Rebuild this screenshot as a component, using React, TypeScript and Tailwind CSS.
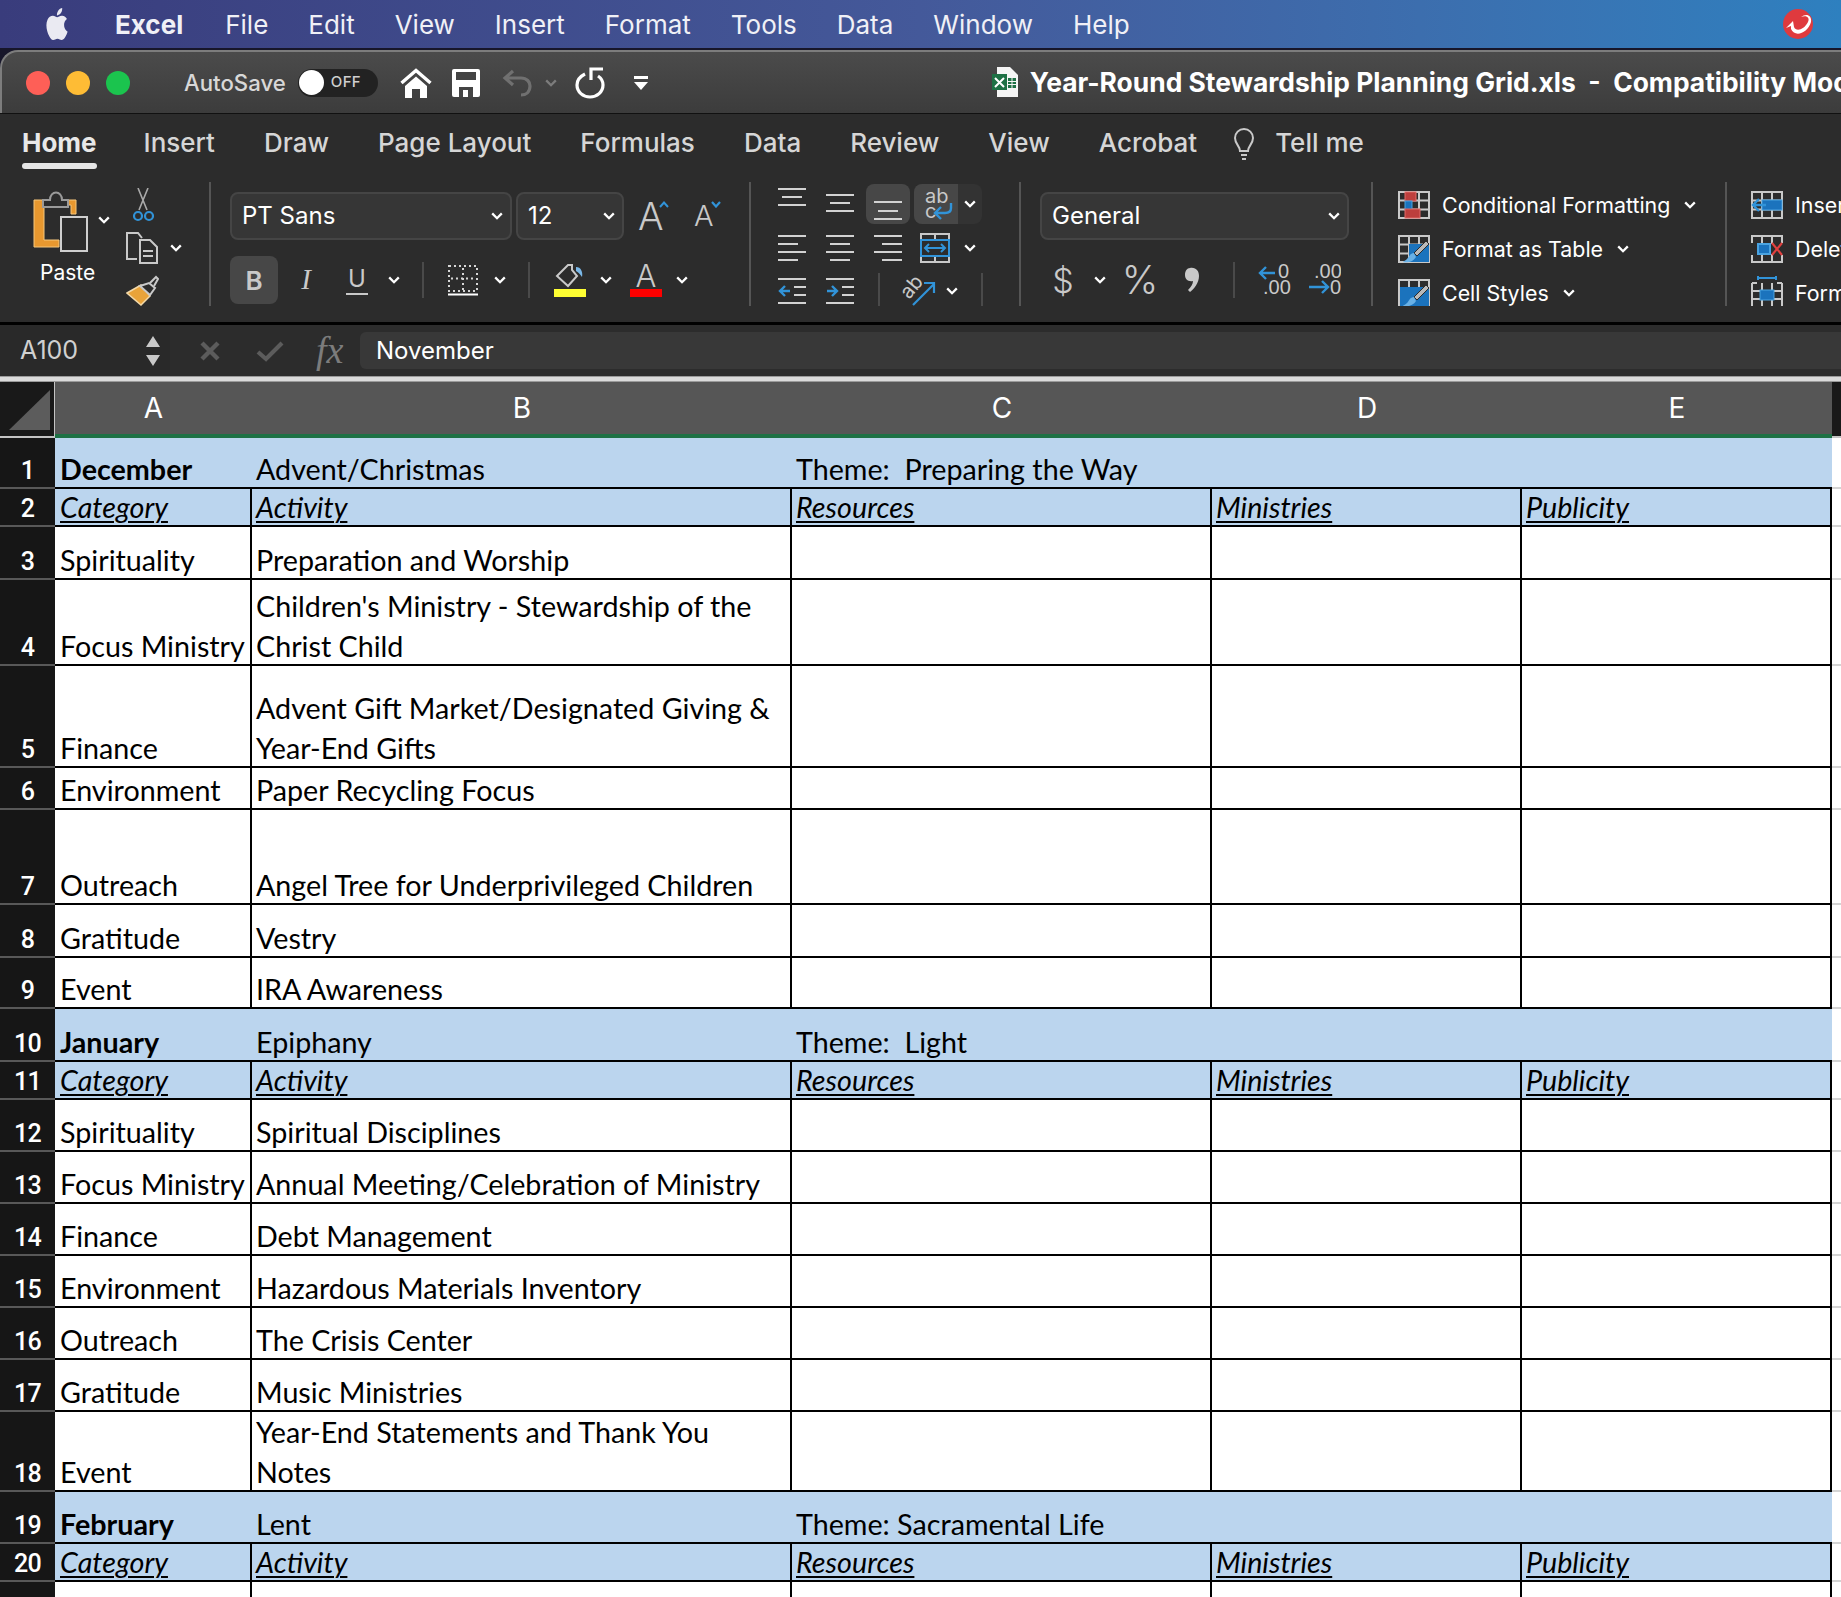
import type { ReactNode } from 'react';

const menuItems = ['File', 'Edit', 'View', 'Insert', 'Format', 'Tools', 'Data', 'Window', 'Help'];
const tabs = ['Insert', 'Draw', 'Page Layout', 'Formulas', 'Data', 'Review', 'View', 'Acrobat'];

type Row = { n: number; h: number; kind?: 'month' | 'head'; a?: string; b?: string; c?: string };

const rows: Row[] = [
  { n: 1, h: 51, kind: 'month', a: 'December', b: 'Advent/Christmas', c: 'Theme:  Preparing the Way' },
  { n: 2, h: 38, kind: 'head' },
  { n: 3, h: 53, a: 'Spirituality', b: 'Preparation and Worship' },
  { n: 4, h: 86, a: 'Focus Ministry', b: "Children's Ministry - Stewardship of the\nChrist Child" },
  { n: 5, h: 102, a: 'Finance', b: 'Advent Gift Market/Designated Giving &\nYear-End Gifts' },
  { n: 6, h: 42, a: 'Environment', b: 'Paper Recycling Focus' },
  { n: 7, h: 95, a: 'Outreach', b: 'Angel Tree for Underprivileged Children' },
  { n: 8, h: 53, a: 'Gratitude', b: 'Vestry' },
  { n: 9, h: 51, a: 'Event', b: 'IRA Awareness' },
  { n: 10, h: 53, kind: 'month', a: 'January', b: 'Epiphany', c: 'Theme:  Light' },
  { n: 11, h: 38, kind: 'head' },
  { n: 12, h: 52, a: 'Spirituality', b: 'Spiritual Disciplines' },
  { n: 13, h: 52, a: 'Focus Ministry', b: 'Annual Meeting/Celebration of Ministry' },
  { n: 14, h: 52, a: 'Finance', b: 'Debt Management' },
  { n: 15, h: 52, a: 'Environment', b: 'Hazardous Materials Inventory' },
  { n: 16, h: 52, a: 'Outreach', b: 'The Crisis Center' },
  { n: 17, h: 52, a: 'Gratitude', b: 'Music Ministries' },
  { n: 18, h: 80, a: 'Event', b: 'Year-End Statements and Thank You\nNotes' },
  { n: 19, h: 52, kind: 'month', a: 'February', b: 'Lent', c: 'Theme: Sacramental Life' },
  { n: 20, h: 38, kind: 'head' },
];

function Chevron({ className = '' }: { className?: string }) {
  return (
    <svg width="12" height="8" viewBox="0 0 12 8" className={`shrink-0 ${className}`}>
      <polyline points="1.2,1.4 6,6.2 10.8,1.4" fill="none" stroke="#fff" strokeWidth="2.3" />
    </svg>
  );
}

function Sep() {
  return <div className="w-[2px] h-[124px] bg-[#555] shrink-0" />;
}

function ShortSep({ className = '' }: { className?: string }) {
  return <div className={`w-[2px] h-[36px] bg-[#4a4a4a] shrink-0 ${className}`} />;
}

function Lines({ lines, h = 30 }: { lines: [number, number, number][]; h?: number }) {
  return (
    <svg width="28" height={h} viewBox={`0 0 28 ${h}`} className="shrink-0">
      {lines.map(([x1, x2, y], i) => (
        <line key={i} x1={x1} x2={x2} y1={y} y2={y} stroke="#d2d2d2" strokeWidth="2" />
      ))}
    </svg>
  );
}

function Select({ label, className }: { label: string; className: string }) {
  return (
    <div className={`h-[48px] flex items-center justify-between pl-[10px] pr-[7px] rounded-lg border-2 border-[#454545] bg-[#363636] text-[24px] text-white shrink-0 ${className}`}>
      <span>{label}</span>
      <Chevron />
    </div>
  );
}

function GridIcon({ children }: { children?: ReactNode }) {
  return (
    <svg width="32" height="28" viewBox="0 0 32 28" className="shrink-0">
      <g stroke="#c9c9c9" strokeWidth="2" fill="none">
        <rect x="1" y="1" width="30" height="26" />
        <path d="M11 1V27M21 1V27M1 9.5H31M1 18.5H31" />
      </g>
      {children}
    </svg>
  );
}

const brush = (
  <g>
    <path d="M31 9 L19 21 L16 18 L28 6 Z" fill="#b9b9b9" stroke="#2c2c2c" strokeWidth="1" />
    <path d="M16 18 C12 18 11 22 9 24 C7 26 5 26 5 27 C9 28 15 27 18 22 Z" fill="#69b1e6" />
  </g>
);

function StyleRow({ icon, label, chevron = true }: { icon: ReactNode; label: string; chevron?: boolean }) {
  return (
    <div className="h-[44px] flex items-center whitespace-nowrap">
      {icon}
      <span className="ml-[12px] text-[21.4px] text-white">{label}</span>
      {chevron && <Chevron className="ml-[14px]" />}
    </div>
  );
}

function DecimalIcon({ increase }: { increase: boolean }) {
  return (
    <svg width="34" height="34" viewBox="0 0 34 34" className="shrink-0">
      <g fill="#c9c9c9" fontFamily="Liberation Sans, sans-serif" fontSize="20">
        {increase ? (
          <>
            <text x="20" y="15">0</text>
            <text x="5" y="31">.00</text>
          </>
        ) : (
          <>
            <text x="7" y="15">.00</text>
            <text x="23" y="31">0</text>
          </>
        )}
      </g>
      {increase ? (
        <path d="M17 10H2M8 4L2 10L8 16" fill="none" stroke="#3193d8" strokeWidth="2.4" />
      ) : (
        <path d="M2 24H21M15 18L21 24L15 30" fill="none" stroke="#3193d8" strokeWidth="2.4" />
      )}
    </svg>
  );
}

function Cell({ w, border, children, className = '' }: { w: string; border: boolean; children?: ReactNode; className?: string }) {
  return (
    <div className={`${w} h-full shrink-0 flex items-end ${border ? 'border-r-2 border-black' : ''} ${className}`}>
      {children}
    </div>
  );
}

function CellText({ children, className = '' }: { children?: ReactNode; className?: string }) {
  return <span className={`-mb-[2px] whitespace-pre leading-[40px] ${className}`}>{children}</span>;
}

function SheetRow({ row }: { row: Row }) {
  const blue = row.kind ? 'bg-[#bbd5ee]' : 'bg-white';
  const head = row.kind === 'head';
  const month = row.kind === 'month';
  const border = !month;
  const text = 'italic underline underline-offset-[3px] decoration-2';
  return (
    <div className="flex" style={{ height: row.h }}>
      <div className="w-[55px] shrink-0 bg-[#161616] border-b-2 border-[#585858] flex items-end justify-center">
        <span className="-mb-[4px] leading-[40px] text-[25px] font-medium tracking-tight text-white font-['Roboto',sans-serif]">{row.n}</span>
      </div>
      <div className={`flex w-[1777px] shrink-0 border-b-2 border-black text-[28.7px] text-black font-['Lato','Noto_Sans',sans-serif] ${blue}`}>
        <Cell w="w-[197px]" border={border} className="pl-[5px]">
          <CellText className={month ? 'font-bold' : head ? text : ''}>{head ? 'Category' : row.a}</CellText>
        </Cell>
        <Cell w="w-[540px]" border={border} className="pl-[4px]">
          <CellText className={head ? text : ''}>{head ? 'Activity' : row.b}</CellText>
        </Cell>
        <Cell w="w-[420px]" border={border} className="pl-[4px]">
          <CellText className={head ? text : ''}>{head ? 'Resources' : row.c}</CellText>
        </Cell>
        <Cell w="w-[310px]" border={border} className="pl-[4px]">
          <CellText className={head ? text : ''}>{head ? 'Ministries' : ''}</CellText>
        </Cell>
        <Cell w="w-[310px]" border={border} className="pl-[4px]">
          <CellText className={head ? text : ''}>{head ? 'Publicity' : ''}</CellText>
        </Cell>
      </div>
      <div className="w-[9px] shrink-0 bg-white border-b-2 border-[#d4d4d4]" />
    </div>
  );
}

export default function App() {
  return (
    <div className="w-[1841px] h-[1597px] overflow-hidden bg-[#17162a] font-['Inter',sans-serif] flex flex-col">
      {/* mac menu bar */}
      <div className="h-[48px] shrink-0 flex items-center bg-linear-to-r from-[#393c7c] via-[#44599a] to-[#2e80bf] text-[26px] text-[#f0f0f6] whitespace-nowrap">
        <svg width="26" height="32" viewBox="0 0 24 24" className="ml-[44px] shrink-0" preserveAspectRatio="none">
          <path fill="#eaeaf2" d="M12.152 6.896c-.948 0-2.415-1.078-3.96-1.04-2.04.027-3.91 1.183-4.961 3.014-2.117 3.675-.546 9.103 1.519 12.09 1.013 1.454 2.208 3.09 3.792 3.039 1.52-.065 2.09-.987 3.935-.987 1.831 0 2.35.987 3.96.948 1.637-.026 2.676-1.48 3.676-2.948 1.156-1.688 1.636-3.325 1.662-3.415-.039-.013-3.182-1.221-3.22-4.857-.026-3.04 2.48-4.494 2.597-4.559-1.429-2.09-3.623-2.324-4.39-2.376-2-.156-3.675 1.09-4.61 1.09zM15.53 3.83c.843-1.012 1.4-2.427 1.245-3.83-1.207.052-2.662.805-3.532 1.818-.78.896-1.454 2.338-1.273 3.714 1.338.104 2.715-.688 3.559-1.701" />
        </svg>
        <span className="ml-[45px] font-bold">Excel</span>
        <div className="ml-[42px] flex gap-[40px]">
          {menuItems.map((m) => (
            <span key={m}>{m}</span>
          ))}
        </div>
        <svg width="32" height="32" viewBox="0 0 32 32" className="ml-auto mr-[27px] shrink-0">
          <circle cx="16" cy="16" r="15" fill="#df3a3e" />
          <path d="M4 20 L11 13 L12 19 C14 24 22 22 26 14 C28 10 25 7 19 9 C24 5 30 7 29 14 C26 25 13 30 9 21 L9 18 Z" fill="#fff" />
        </svg>
      </div>

      {/* title bar */}
      <div className="mt-[2px] h-[63px] shrink-0 flex items-center rounded-tl-[18px] border-t-2 border-l-2 border-[#7d7d7d] bg-linear-to-b from-[#4b4b4b] to-[#3c3c3c] whitespace-nowrap">
        <div className="ml-[24px] flex gap-[16px] shrink-0">
          <div className="w-[24px] h-[24px] rounded-full bg-[#fe5f57]" />
          <div className="w-[24px] h-[24px] rounded-full bg-[#febc35]" />
          <div className="w-[24px] h-[24px] rounded-full bg-[#1bc44e]" />
        </div>
        <span className="ml-[54px] text-[22.2px] font-medium text-[#d8d8d8]">AutoSave</span>
        <div className="ml-[12px] w-[80px] h-[28px] rounded-full bg-[#222] flex items-center shrink-0">
          <div className="w-[25px] h-[25px] rounded-full bg-white ml-[1px]" />
          <span className="ml-[7px] text-[15px] font-medium text-[#cfcfcf] tracking-wide">OFF</span>
        </div>
        <svg width="32" height="30" viewBox="0 0 32 30" className="ml-[22px] shrink-0">
          <polyline points="1.5,15 16,2.5 30.5,15" fill="none" stroke="#fff" strokeWidth="3.4" />
          <path d="M5 18 L16 8.5 L27 18 V30 H20 V21 H12 V30 H5 Z" fill="#fff" />
        </svg>
        <svg width="28" height="28" viewBox="0 0 28 28" className="ml-[20px] shrink-0">
          <path d="M2 0 H26 A2 2 0 0 1 28 2 V26 A2 2 0 0 1 26 28 H2 A2 2 0 0 1 0 26 V2 A2 2 0 0 1 2 0 Z" fill="#fff" />
          <rect x="4" y="3" width="20" height="8" fill="#444" />
          <rect x="7" y="18" width="14" height="10" fill="#444" />
          <rect x="11" y="21" width="5" height="7" fill="#fff" />
        </svg>
        <svg width="31" height="30" viewBox="0 0 31 30" className="ml-[22px] shrink-0">
          <path d="M11 3 L3 10 L11 17 M3 10 H19 C25 10 28 14 28 18 C28 24 24 27 19 27" fill="none" stroke="#707070" strokeWidth="3.2" />
        </svg>
        <Chevron className="ml-[12px] opacity-30" />
        <svg width="31" height="32" viewBox="0 0 31 32" className="ml-[18px] shrink-0">
          <path d="M10 7 C4 10 2 14 2 18 C2 25 8 30 15 30 C22 30 28 25 28 18 C28 14 26 11 23 9 M16 13 V2 H28" fill="none" stroke="#fff" strokeWidth="3.2" />
        </svg>
        <svg width="16" height="14" viewBox="0 0 16 14" className="ml-[27px] shrink-0">
          <rect x="1" y="0" width="14" height="3" fill="#fff" />
          <path d="M1 6 H15 L8 14 Z" fill="#fff" />
        </svg>
        <svg width="28" height="32" viewBox="0 0 28 32" className="ml-[342px] shrink-0">
          <path d="M6 0 H19 L27 8 V30 H6 Z" fill="#f5f5f5" />
          <rect x="17" y="11" width="8" height="10" fill="#1e7145" />
          <path d="M17 14.5H25M17 17.5H25M21 11V21" stroke="#f5f5f5" strokeWidth="1" />
          <rect x="1" y="7" width="15" height="16" fill="#1e7145" />
          <path d="M4 11 L13 20 M13 11 L4 20" stroke="#fff" strokeWidth="2" />
        </svg>
        <span className="ml-[11px] text-[26.4px] font-bold text-white whitespace-pre">Year-Round Stewardship Planning Grid.xls  -  Compatibility Mode</span>
      </div>
      <div className="h-[1px] shrink-0 bg-[#111]" />

      {/* ribbon */}
      <div className="h-[208px] shrink-0 bg-[#2c2c2c] flex flex-col whitespace-nowrap">
        <div className="h-[68px] shrink-0 flex items-start pl-[22px] pt-[14px] text-[26px] font-medium text-[#d6d6d6]">
          <div className="flex flex-col">
            <span className="font-bold text-[#e8e8e8] leading-[30px]">Home</span>
            <div className="mt-[5px] h-[6px] rounded-full bg-[#e6e6e6]" />
          </div>
          <div className="ml-[47px] flex gap-[49px]">
            {tabs.map((t) => (
              <span key={t} className="leading-[30px]">{t}</span>
            ))}
          </div>
          <svg width="22" height="34" viewBox="0 0 22 34" className="ml-[36px] shrink-0">
            <path d="M7 23 C7 18 2 16 2 10 A9 9 0 0 1 20 10 C20 16 15 18 15 23 Z" fill="none" stroke="#c9c9c9" strokeWidth="2" />
            <path d="M8 27 H14 M9 31 H13" stroke="#c9c9c9" strokeWidth="2" />
          </svg>
          <span className="ml-[20px] leading-[30px]">Tell me</span>
        </div>

        <div className="h-[124px] shrink-0 flex overflow-hidden">
          {/* clipboard */}
          <div className="w-[209px] shrink-0 pl-[33px] flex">
            <div className="w-[93px] shrink-0 pt-[8px] flex flex-col">
              <div className="flex">
                <svg width="56" height="62" viewBox="0 0 56 62" className="shrink-0">
                  <path d="M1 10 H43 V24 H38 V15 H11 V50 H26 V57 H1 Z" fill="#e8982f" stroke="#f6c77c" strokeWidth="1" />
                  <path d="M10 17 V10 H17 C17 0 29 0 29 10 H35 V17 Z" fill="#2c2c2c" stroke="#9a9a9a" strokeWidth="2" />
                  <rect x="28" y="27" width="26" height="34" fill="#2c2c2c" stroke="#cfcfcf" strokeWidth="2" />
                </svg>
                <Chevron className="ml-[9px] mt-[26px]" />
              </div>
              <span className="ml-[7px] mt-[9px] text-[21px] leading-[24px] text-white">Paste</span>
            </div>
            <div className="pt-[6px] flex flex-col">
              <svg width="22" height="34" viewBox="0 0 22 34" className="ml-[6px] shrink-0">
                <path d="M6 0 L15 22 M16 0 L7 22" stroke="#aaa" strokeWidth="1.6" />
                <circle cx="6" cy="28" r="4" fill="none" stroke="#3193d8" strokeWidth="2.2" />
                <circle cx="17" cy="28" r="4" fill="none" stroke="#3193d8" strokeWidth="2.2" />
              </svg>
              <div className="mt-[10px] flex items-center">
                <svg width="33" height="32" viewBox="0 0 33 32" className="shrink-0">
                  <path d="M11 27 H1 V1 H12 L16 6" fill="none" stroke="#c9c9c9" strokeWidth="2" />
                  <path d="M14 8 H24 L31 15 V31 H14 Z M17 19 H27 M17 24 H27" fill="none" stroke="#c9c9c9" strokeWidth="2" />
                </svg>
                <Chevron className="ml-[11px]" />
              </div>
              <svg width="33" height="31" viewBox="0 0 33 31" className="mt-[11px] shrink-0">
                <path d="M1 18 L15 10 L24 21 L15 30 Z" fill="#e8a33a" stroke="#f3d9a8" strokeWidth="1.5" />
                <path d="M14 11 L24 20 L29 13 L23 8 Z" fill="#2c2c2c" stroke="#c9c9c9" strokeWidth="2" />
                <path d="M24 8 L30 2 L32 4 L28 11" fill="none" stroke="#c9c9c9" strokeWidth="2" />
              </svg>
            </div>
          </div>
          <Sep />

          {/* font */}
          <div className="w-[538px] shrink-0 pl-[19px] pt-[10px]">
            <div className="flex items-center">
              <Select label="PT Sans" className="w-[282px]" />
              <Select label="12" className="w-[108px] ml-[4px]" />
              <div className="ml-[14px] w-[23px] flex items-end">
                <span className="text-[38px] leading-[48px] font-light text-[#c9c9c9]">A</span>
              </div>
              <svg width="10" height="7" viewBox="0 0 10 7" className="-ml-[2px] mb-[24px] shrink-0">
                <polyline points="1,6 5,1.5 9,6" fill="none" stroke="#3193d8" strokeWidth="2" />
              </svg>
              <span className="ml-[25px] text-[29px] leading-[48px] font-light text-[#c9c9c9]">A</span>
              <svg width="10" height="7" viewBox="0 0 10 7" className="-ml-[3px] mb-[24px] shrink-0">
                <polyline points="1,1 5,5.5 9,1" fill="none" stroke="#3193d8" strokeWidth="2.2" />
              </svg>
            </div>
            <div className="mt-[16px] flex items-center">
              <div className="w-[48px] h-[48px] rounded-lg bg-[#474747] flex items-center justify-center text-[26px] font-semibold text-[#c9c9c9] shrink-0">B</div>
              <span className="ml-[18px] w-[20px] text-center text-[29px] italic text-[#c9c9c9] font-['Liberation_Serif',serif]">I</span>
              <span className="ml-[30px] w-[22px] text-center text-[24px] text-[#c9c9c9] border-b-2 border-[#c9c9c9] leading-[28px]">U</span>
              <Chevron className="ml-[20px]" />
              <ShortSep className="ml-[22px]" />
              <svg width="30" height="31" viewBox="0 0 30 31" className="ml-[24px] shrink-0">
                <rect x="1" y="1" width="28" height="25" fill="none" stroke="#d6d6d6" strokeWidth="2" strokeDasharray="2 3" />
                <path d="M15 3V25M3 13.5H27" fill="none" stroke="#d6d6d6" strokeWidth="2" strokeDasharray="2 3" />
                <line x1="0" x2="30" y1="29.5" y2="29.5" stroke="#fff" strokeWidth="2" />
              </svg>
              <Chevron className="ml-[16px]" />
              <ShortSep className="ml-[22px]" />
              <div className="ml-[24px] w-[32px] flex flex-col shrink-0">
                <svg width="32" height="26" viewBox="0 0 32 26">
                  <path d="M3 13 L14 2 H18 V7 L23 13 L14 23 Z" fill="none" stroke="#c9c9c9" strokeWidth="2" />
                  <path d="M22 4 C27 4 29 9 28 14 C26 11 24 9 22 8 Z" fill="#7ab8e8" />
                </svg>
                <div className="h-[8px] bg-[#ffff33]" />
              </div>
              <Chevron className="ml-[14px]" />
              <div className="ml-[18px] w-[32px] flex flex-col items-center shrink-0">
                <span className="text-[31px] leading-[26px] font-light text-[#c9c9c9]">A</span>
                <div className="w-full h-[8px] bg-[#ff0000]" />
              </div>
              <Chevron className="ml-[14px]" />
            </div>
          </div>
          <Sep />

          {/* alignment */}
          <div className="w-[268px] shrink-0 pl-[27px] pt-[2px]">
            <div className="h-[40px] flex items-center">
              <Lines h={40} lines={[[0, 28, 5], [4, 24, 13], [0, 28, 21]]} />
              <div className="ml-[20px]">
                <Lines h={40} lines={[[0, 28, 11], [4, 24, 19], [0, 28, 27]]} />
              </div>
              <div className="ml-[12px] w-[44px] h-[40px] rounded-lg bg-[#474747] flex justify-center shrink-0">
                <Lines h={40} lines={[[0, 28, 18], [4, 24, 27], [0, 28, 35]]} />
              </div>
              <div className="ml-[4px] w-[68px] h-[40px] rounded-lg bg-[#333] flex items-center overflow-hidden shrink-0">
                <div className="w-[44px] h-full bg-[#474747] flex items-center justify-center">
                  <svg width="36" height="36" viewBox="0 0 36 36">
                    <text x="7" y="17" fontSize="20" fill="#c9c9c9" fontFamily="Inter, sans-serif">ab</text>
                    <text x="7" y="32" fontSize="20" fill="#c9c9c9" fontFamily="Inter, sans-serif">c</text>
                    <path d="M33 17 V22 C33 26 30 27 27 27 H18 M23 21 L17 27 L23 33" fill="none" stroke="#3193d8" strokeWidth="2.4" />
                  </svg>
                </div>
                <Chevron className="ml-[6px]" />
              </div>
            </div>
            <div className="mt-[9px] h-[30px] flex items-center">
              <Lines lines={[[0, 28, 3], [0, 20, 11], [0, 28, 19], [0, 20, 27]]} />
              <div className="ml-[20px]">
                <Lines lines={[[0, 28, 3], [4, 24, 11], [0, 28, 19], [4, 24, 27]]} />
              </div>
              <div className="ml-[20px]">
                <Lines lines={[[0, 28, 3], [8, 28, 11], [0, 28, 19], [8, 28, 27]]} />
              </div>
              <svg width="30" height="30" viewBox="0 0 30 30" className="ml-[18px] shrink-0">
                <path d="M1 6 V1 H29 V6 M1 24 V29 H29 V24 M15 1 V6 M15 24 V29" fill="none" stroke="#c9c9c9" strokeWidth="2" />
                <rect x="1" y="7" width="28" height="16" fill="none" stroke="#3193d8" strokeWidth="2" />
                <path d="M5 15 H25 M9 11 L5 15 L9 19 M21 11 L25 15 L21 19" fill="none" stroke="#3193d8" strokeWidth="2" />
              </svg>
              <Chevron className="ml-[14px]" />
            </div>
            <div className="mt-[12px] h-[32px] flex items-center">
              <svg width="28" height="28" viewBox="0 0 28 28" className="shrink-0">
                <path d="M0 2 H28 M0 26 H28 M16 10 H28 M16 18 H28" stroke="#d2d2d2" strokeWidth="2" />
                <path d="M12 14 H2 M7 9 L2 14 L7 19" fill="none" stroke="#3193d8" strokeWidth="2.4" />
              </svg>
              <svg width="28" height="28" viewBox="0 0 28 28" className="ml-[20px] shrink-0">
                <path d="M0 2 H28 M0 26 H28 M16 10 H28 M16 18 H28" stroke="#d2d2d2" strokeWidth="2" />
                <path d="M1 14 H11 M6 9 L11 14 L6 19" fill="none" stroke="#3193d8" strokeWidth="2.4" />
              </svg>
              <ShortSep className="ml-[24px]" />
              <svg width="34" height="32" viewBox="0 0 34 32" className="ml-[22px] shrink-0">
                <text fontSize="20" fill="#c9c9c9" fontFamily="Inter, sans-serif" transform="translate(7,25) rotate(-50)">ab</text>
                <path d="M11 30 L32 9 M22 8 H32 V18" fill="none" stroke="#3193d8" strokeWidth="2.2" />
              </svg>
              <Chevron className="ml-[10px]" />
              <ShortSep className="ml-[23px]" />
            </div>
          </div>
          <Sep />

          {/* number */}
          <div className="w-[350px] shrink-0 pl-[19px] pt-[10px]">
            <Select label="General" className="w-[309px]" />
            <div className="mt-[16px] h-[48px] flex items-center">
              <span className="ml-[15px] w-[16px] flex justify-center text-[34px] font-light text-[#c9c9c9]">$</span>
              <Chevron className="ml-[23px]" />
              <span className="ml-[19px] w-[30px] flex justify-center text-[39px] font-light text-[#c9c9c9]">%</span>
              <svg width="16" height="26" viewBox="0 0 16 26" className="ml-[29px] shrink-0">
                <path d="M6 1 C12 0 15 4 15 9 C15 16 10 22 6 25 L4 23 C7 20 9 17 9 14 C4 15 1 12 1 8 C1 4 3 1 6 1 Z" fill="#c9c9c9" />
              </svg>
              <ShortSep className="ml-[33px]" />
              <div className="ml-[23px]">
                <DecimalIcon increase />
              </div>
              <div className="ml-[15px]">
                <DecimalIcon increase={false} />
              </div>
            </div>
          </div>
          <Sep />

          {/* styles */}
          <div className="w-[352px] shrink-0 pl-[25px] pt-[1px]">
            <StyleRow
              label="Conditional Formatting"
              icon={
                <GridIcon>
                  <rect x="7" y="1" width="11" height="9" fill="#bd3f3d" stroke="#e16a67" />
                  <rect x="7" y="10" width="7" height="9" fill="#1b73bd" stroke="#4aa3e0" />
                  <rect x="7" y="18" width="15" height="9" fill="#bd3f3d" stroke="#e16a67" />
                </GridIcon>
              }
            />
            <StyleRow
              label="Format as Table"
              icon={
                <GridIcon>
                  <rect x="11" y="9" width="20" height="18" fill="#1b73bd" />
                  {brush}
                </GridIcon>
              }
            />
            <StyleRow
              label="Cell Styles"
              icon={
                <GridIcon>
                  <rect x="2" y="8" width="29" height="19" fill="#1b73bd" />
                  {brush}
                </GridIcon>
              }
            />
          </div>
          <Sep />

          {/* cells */}
          <div className="pl-[24px] pt-[1px]">
            <StyleRow
              label="Insert"
              chevron={false}
              icon={
                <GridIcon>
                  <rect x="11" y="9" width="20" height="10" fill="#1b73bd" stroke="#4aa3e0" />
                  <path d="M15 14 H2 M8 8 L2 14 L8 20" fill="none" stroke="#3193d8" strokeWidth="2.4" />
                </GridIcon>
              }
            />
            <StyleRow
              label="Delete"
              chevron={false}
              icon={
                <svg width="32" height="28" viewBox="0 0 32 28" className="shrink-0">
                  <path d="M1 8 V1 H31 V8 M1 20 V27 H31 V20 M11 1 V9 M21 1 V9 M11 19 V27 M21 19 V27" fill="none" stroke="#c9c9c9" strokeWidth="2" />
                  <rect x="7" y="9" width="12" height="10" fill="#1b73bd" stroke="#4aa3e0" strokeWidth="2" />
                  <path d="M21 8 L31 20 M31 8 L21 20" stroke="#e0403f" strokeWidth="2.2" />
                </svg>
              }
            />
            <StyleRow
              label="Format"
              chevron={false}
              icon={
                <svg width="32" height="32" viewBox="0 0 32 32" className="shrink-0 -mt-[2px]">
                  <path d="M7 2 H25 M7 0 V4 M25 0 V4" stroke="#3193d8" strokeWidth="2" />
                  <g stroke="#c9c9c9" strokeWidth="2" fill="none">
                    <path d="M1 7 V31 H31 V7 M1 7 H6 M26 7 H31 M11 7 V31 M21 7 V31 M1 15 H31 M1 23 H31" />
                  </g>
                  <rect x="9" y="14" width="14" height="10" fill="#1b73bd" stroke="#4aa3e0" />
                </svg>
              }
            />
          </div>
        </div>
        <div className="h-[16px] shrink-0" />
      </div>
      <div className="h-[3px] shrink-0 bg-black" />

      {/* formula bar */}
      <div className="h-[51px] shrink-0 bg-[#2c2c2c] flex items-start whitespace-nowrap">
        <div className="w-[170px] h-full shrink-0 bg-[#292929] flex items-center pl-[20px] pr-[10px] text-[25px] text-[#d0d0d0]">
          <span>A100</span>
          <svg width="14" height="32" viewBox="0 0 14 32" className="ml-auto shrink-0">
            <path d="M7 1 L14 12 H0 Z M0 20 H14 L7 31 Z" fill="#c9c9c9" />
          </svg>
        </div>
        <div className="h-full flex items-center shrink-0">
          <svg width="20" height="20" viewBox="0 0 20 20" className="ml-[30px] shrink-0">
            <path d="M2 2 L18 18 M18 2 L2 18" stroke="#5c5c5c" strokeWidth="4.4" />
          </svg>
          <svg width="28" height="22" viewBox="0 0 28 22" className="ml-[36px] shrink-0">
            <path d="M2 12 L10 19 L26 3" fill="none" stroke="#5c5c5c" strokeWidth="4.2" />
          </svg>
          <span className="ml-[32px] w-[30px] text-[38px] italic text-[#7c7c7c] font-['Liberation_Serif',serif]">fx</span>
        </div>
        <div className="ml-[14px] mt-[7px] h-[37px] flex-1 rounded-l-md bg-[#383838] flex items-center pl-[16px] pt-[1px] text-[24px] text-white">November</div>
      </div>
      <div className="h-[6px] shrink-0 bg-[#dadada] border-y border-[#9a9a9a]" />

      {/* sheet */}
      <div className="flex-1 bg-white flex flex-col">
        <div className="flex h-[56px] shrink-0">
          <div className="w-[55px] shrink-0 bg-[#191919] border-r border-b-2 border-[#c4c4c4]">
            <svg width="54" height="54" viewBox="0 0 54 54">
              <path d="M9 48 L50 8 V48 Z" fill="#5c5c5c" />
            </svg>
          </div>
          {[
            ['A', 'w-[197px]'],
            ['B', 'w-[540px]'],
            ['C', 'w-[420px]'],
            ['D', 'w-[310px]'],
            ['E', 'w-[310px]'],
          ].map(([c, w]) => (
            <div key={c} className={`${w} shrink-0 bg-[#565656] border-b-4 border-[#1e7145] flex items-center justify-center text-[28px] text-white`}>{c}</div>
          ))}
          <div className="w-[9px] shrink-0 bg-[#191919] border-b-2 border-[#c4c4c4]" />
        </div>
        {rows.map((r) => (
          <SheetRow key={r.n} row={r} />
        ))}
        <div className="flex flex-1">
          <div className="w-[55px] bg-[#161616]" />
          <div className="w-[197px] border-r-2 border-black" />
          <div className="w-[540px] border-r-2 border-black" />
          <div className="w-[420px] border-r-2 border-black" />
          <div className="w-[310px] border-r-2 border-black" />
          <div className="w-[310px] border-r-2 border-black" />
        </div>
      </div>
    </div>
  );
}
